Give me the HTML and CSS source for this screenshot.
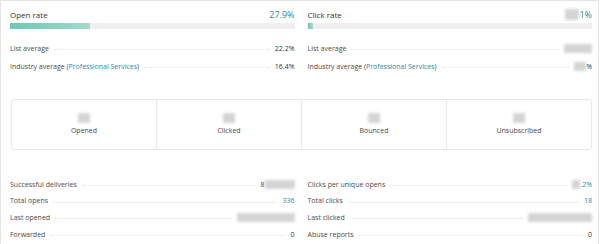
FILE: index.html
```html
<!DOCTYPE html>
<html lang="en">
<head>
    <meta charset="UTF-8">
    <title>Campaign Report</title>
    <link rel="stylesheet" href="styles.css">
</head>
<body>
    <div class="panel">
        <div class="rates">
            <div class="rate-col">
                <div class="rate-head">
                    <span class="rate-title">Open rate</span>
                    <span class="rate-value">27.9%</span>
                </div>
                <div class="bar"><div class="bar-fill" style="width: 28%"></div></div>
                <div class="row">
                    <span class="label">List average</span>
                    <span class="leader"></span>
                    <span class="value">22.2%</span>
                </div>
                <div class="row">
                    <span class="label">Industry average (<a href="#">Professional Services</a>)</span>
                    <span class="leader"></span>
                    <span class="value">16.4%</span>
                </div>
            </div>
            <div class="rate-col">
                <div class="rate-head">
                    <span class="rate-title">Click rate</span>
                    <span class="rate-value"><span class="blur w14"></span>1%</span>
                </div>
                <div class="bar"><div class="bar-fill" style="width: 2%"></div></div>
                <div class="row">
                    <span class="label">List average</span>
                    <span class="leader"></span>
                    <span class="value"><span class="blur w28"></span></span>
                </div>
                <div class="row">
                    <span class="label">Industry average (<a href="#">Professional Services</a>)</span>
                    <span class="leader"></span>
                    <span class="value"><span class="blur w12"></span>%</span>
                </div>
            </div>
        </div>

        <div class="stats">
            <div class="stat">
                <span class="blur num"></span>
                <span class="stat-label">Opened</span>
            </div>
            <div class="stat">
                <span class="blur num"></span>
                <span class="stat-label">Clicked</span>
            </div>
            <div class="stat">
                <span class="blur num"></span>
                <span class="stat-label">Bounced</span>
            </div>
            <div class="stat">
                <span class="blur num"></span>
                <span class="stat-label">Unsubscribed</span>
            </div>
        </div>

        <div class="details">
            <div class="detail-col">
                <div class="row">
                    <span class="label">Successful deliveries</span>
                    <span class="leader"></span>
                    <span class="value">8<span class="blur w30"></span></span>
                </div>
                <div class="row">
                    <span class="label">Total opens</span>
                    <span class="leader"></span>
                    <span class="value link">336</span>
                </div>
                <div class="row">
                    <span class="label">Last opened</span>
                    <span class="leader"></span>
                    <span class="value"><span class="blur w58"></span></span>
                </div>
                <div class="row">
                    <span class="label">Forwarded</span>
                    <span class="leader"></span>
                    <span class="value">0</span>
                </div>
            </div>
            <div class="detail-col">
                <div class="row">
                    <span class="label">Clicks per unique opens</span>
                    <span class="leader"></span>
                    <span class="value link"><span class="blur w8"></span>.2%</span>
                </div>
                <div class="row">
                    <span class="label">Total clicks</span>
                    <span class="leader"></span>
                    <span class="value link">18</span>
                </div>
                <div class="row">
                    <span class="label">Last clicked</span>
                    <span class="leader"></span>
                    <span class="value"><span class="blur w64"></span></span>
                </div>
                <div class="row">
                    <span class="label">Abuse reports</span>
                    <span class="leader"></span>
                    <span class="value">0</span>
                </div>
            </div>
        </div>
    </div>
</body>
</html>
```

FILE: styles.css
```css
body {
    margin: 0;
    background: #fff;
    font-family: "Open Sans", Arial, sans-serif;
    color: #4a4a4a;
    overflow: hidden;
}
.panel {
    width: 599px;
    height: 100vh;
    border: 1px solid #e4e4e4;
    border-bottom: none;
    padding: 0 6px 0 9px;
    box-sizing: border-box;
}
.rates {
    display: flex;
    gap: 13px;
    padding-top: 6px;
}
.rate-col {
    flex: 1;
}
.rate-head {
    display: flex;
    justify-content: space-between;
    align-items: center;
    height: 14px;
}
.rate-title {
    font-size: 8px;
    color: #333;
}
.rate-value {
    display: flex;
    align-items: center;
    font-size: 9px;
    color: #2a8aa3;
}
.bar {
    height: 6px;
    margin-top: 2px;
    background: #f0f0f0;
}
.bar-fill {
    height: 100%;
    min-width: 5px;
    background: linear-gradient(90deg, #6ec6b3, #a3dacb);
}
.rates .row {
    margin-top: 13px;
}
.rates .row + .row {
    margin-top: 6px;
}
.row {
    display: flex;
    align-items: center;
    height: 12px;
    font-size: 7px;
}
.label {
    white-space: nowrap;
}
.label a {
    color: #2a8aa3;
    text-decoration: none;
}
.leader {
    flex: 1;
    margin: 3px 5px 0;
    border-bottom: 1px dotted #e2e2e2;
}
.value {
    display: flex;
    align-items: center;
    color: #333;
}
.value.link {
    color: #2a8aa3;
}
.blur {
    display: inline-block;
    height: 9px;
    background: #d4d4d4;
    filter: blur(1.5px);
}
.w8 { width: 8px; }
.w12 { width: 12px; }
.w14 { width: 14px; height: 11px; }
.w28 { width: 28px; }
.w30 { width: 30px; }
.w58 { width: 58px; }
.w64 { width: 64px; }
.stats {
    display: flex;
    margin: 27px 0 0 1px;
    height: 49px;
    border: 1px solid #e8e8e8;
    border-radius: 3px;
}
.stat {
    flex: 1;
    display: flex;
    flex-direction: column;
    align-items: center;
    padding-top: 13px;
}
.stat + .stat {
    border-left: 1px solid #e8e8e8;
}
.blur.num {
    width: 12px;
    height: 10px;
}
.stat-label {
    font-size: 7px;
    margin-top: 3px;
}
.details {
    display: flex;
    gap: 13px;
    margin-top: 28px;
}
.detail-col {
    flex: 1;
    display: flex;
    flex-direction: column;
    gap: 4.7px;
}
```
